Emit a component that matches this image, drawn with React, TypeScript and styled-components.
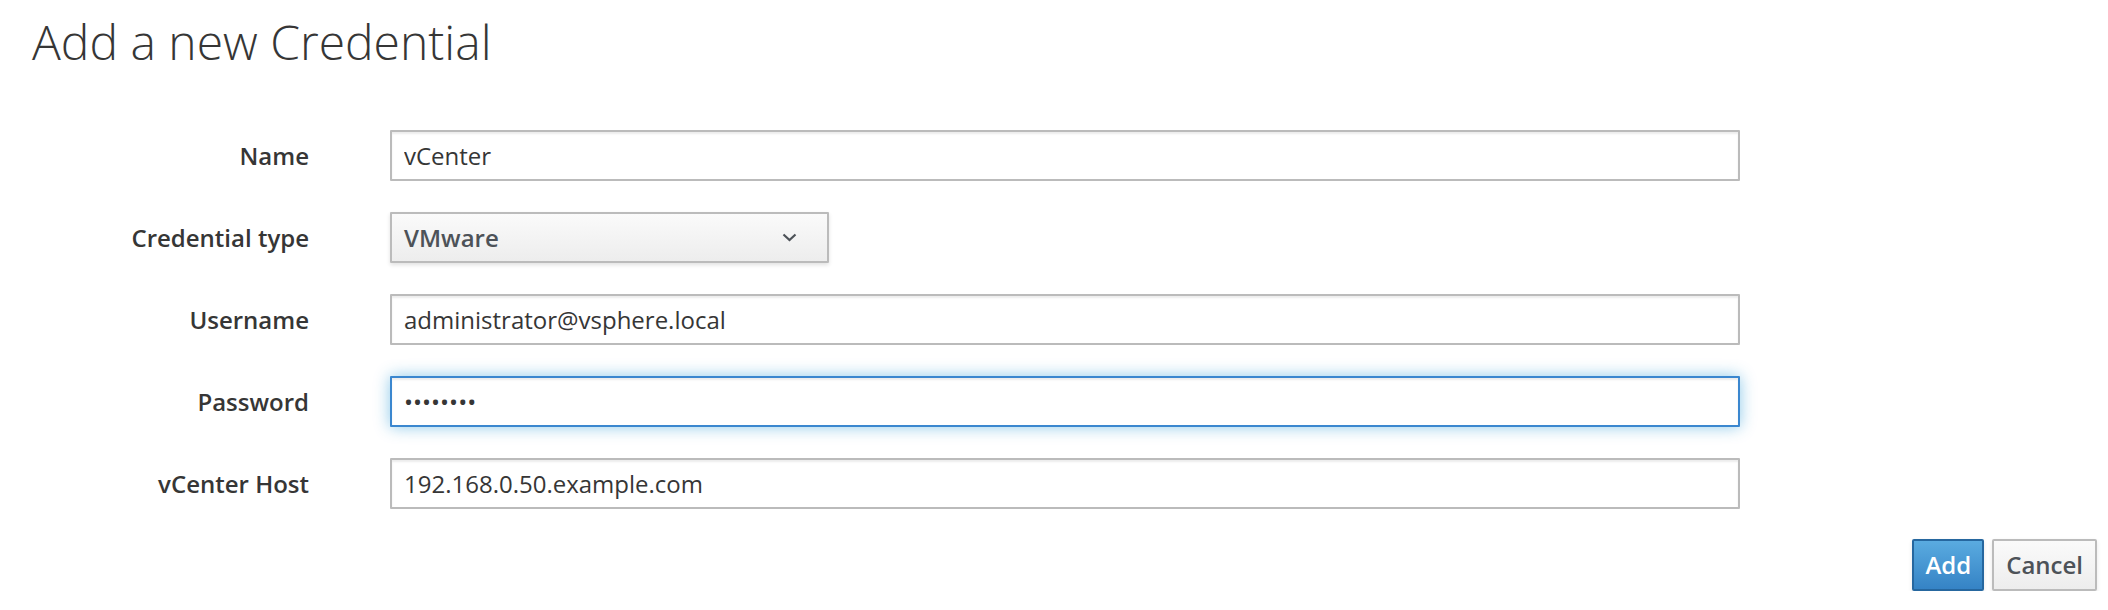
import React from 'react';
import styled, { createGlobalStyle } from 'styled-components';

const GlobalStyle = createGlobalStyle`
body {
  margin: 0;
  background: #fff;
  font-family: "Open Sans", "Liberation Sans", sans-serif;
  color: #363636;
}
`;

const fields = [
  { label: 'Name', value: 'vCenter', type: 'text' },
  { label: 'Username', value: 'administrator@vsphere.local', type: 'text' },
  { label: 'Password', value: '12345678', type: 'password', focused: true },
  { label: 'vCenter Host', value: '192.168.0.50.example.com', type: 'text' },
];

const App: React.FC = () => {
  const [name, ...rest] = fields;

  return (
    <Page>
      <GlobalStyle />
      <Title>Add a new Credential</Title>
      <Form>
        <Label>{name.label}</Label>
        <TextInput type={name.type} defaultValue={name.value} />
        <Label>Credential type</Label>
        <SelectButton>
          <span>VMware</span>
          <svg width="15" height="9" viewBox="0 0 15 9">
            <path d="M1.5 1.5 L7.5 7 L13.5 1.5" fill="none" stroke="#4d5258" strokeWidth="2.2" />
          </svg>
        </SelectButton>
        {rest.map((f) => (
          <React.Fragment key={f.label}>
            <Label>{f.label}</Label>
            <TextInput type={f.type} defaultValue={f.value} $focused={f.focused} />
          </React.Fragment>
        ))}
      </Form>
      <Actions>
        <Button $primary>Add</Button>
        <Button>Cancel</Button>
      </Actions>
    </Page>
  );
};

const Page = styled.div`
padding: 0 11px 0 32px;
`;

const Title = styled.h1`
margin: 16px 0 0;
font-size: 48px;
line-height: 1.1;
font-weight: 300;
color: #363636;
`;

const Form = styled.div`
display: grid;
grid-template-columns: 277px 1350px;
column-gap: 81px;
row-gap: 31px;
align-items: center;
margin-top: 61px;
`;

const Label = styled.label`
text-align: right;
font-size: 24px;
font-weight: 600;
color: #363636;
`;

const TextInput = styled.input<{ $focused?: boolean }>`
box-sizing: border-box;
width: 100%;
height: 51px;
padding: 0 12px;
border: 2px solid ${(p) => (p.$focused ? '#3b87cf' : '#bbbbbb')};
border-radius: 1px;
font-family: "Open Sans", "Liberation Sans", sans-serif;
font-size: 24px;
color: #363636;
background: #fff;
outline: none;
box-shadow: ${(p) =>
  p.$focused
    ? 'inset 0 2px 2px rgba(3,3,3,0.075), 0 0 16px rgba(0,136,206,0.45)'
    : 'inset 0 2px 2px rgba(3,3,3,0.075)'};
`;

const SelectButton = styled.div`
box-sizing: border-box;
width: 439px;
height: 51px;
display: flex;
align-items: center;
justify-content: space-between;
padding: 0 30px 0 12px;
border: 2px solid #bbbbbb;
border-radius: 1px;
background: linear-gradient(to bottom, #fafafa 0%, #ededed 100%);
box-shadow: 0 2px 4px rgba(3,3,3,0.12);
font-size: 24px;
font-weight: 600;
color: #4d5258;
svg {
  display: block;
}
`;

const Actions = styled.div`
display: flex;
justify-content: flex-end;
gap: 8px;
margin-top: 30px;
`;

const Button = styled.button<{ $primary?: boolean }>`
box-sizing: border-box;
height: 52px;
padding: 0 ${(p) => (p.$primary ? '11px' : '12px')};
border-radius: 2px;
font-family: "Open Sans", "Liberation Sans", sans-serif;
font-size: 24px;
font-weight: 600;
border: 2px solid ${(p) => (p.$primary ? '#26679f' : '#bbbbbb')};
color: ${(p) => (p.$primary ? '#fff' : '#4d5258')};
background: ${(p) =>
  p.$primary
    ? 'linear-gradient(to bottom, #5aabe0 0%, #3583c5 100%)'
    : 'linear-gradient(to bottom, #fafafa 0%, #ededed 100%)'};
box-shadow: 0 2px 4px rgba(3,3,3,0.1);
`;

export default App;
